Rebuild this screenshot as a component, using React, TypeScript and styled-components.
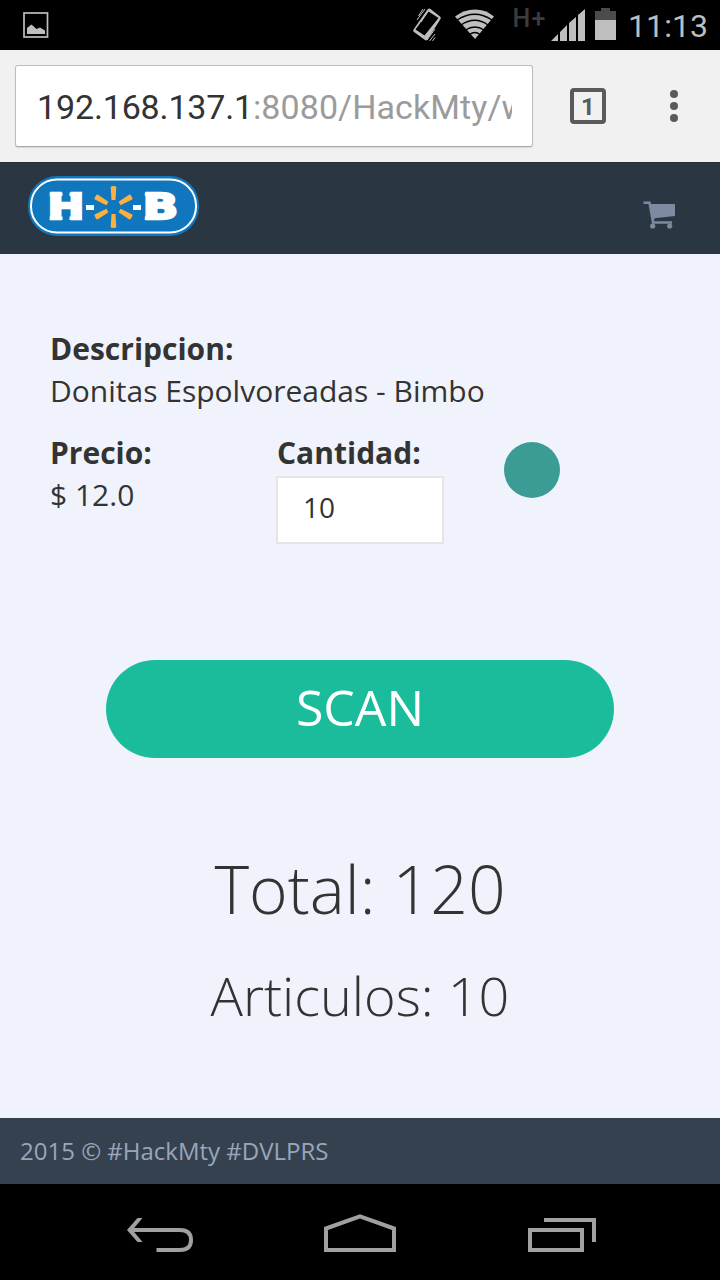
import React from "react";
import styled, { createGlobalStyle } from "styled-components";

const GlobalStyle = createGlobalStyle`
  * { box-sizing: border-box; }
  body { margin: 0; background: #000; }
`;

const Screen = styled.div`
  width: 720px;
  height: 1280px;
  display: flex;
  flex-direction: column;
  overflow: hidden;
  background: #f0f3fb;
  color: #333;
  font-family: "Open Sans", sans-serif;
`;

const StatusBar = styled.header`
  height: 50px;
  flex: none;
  display: flex;
  justify-content: space-between;
  background: #000;
`;

const Clock = styled.time`
  width: 92px;
  flex: none;
  padding-top: 7px;
  font: 400 32px/38px Roboto, sans-serif;
  letter-spacing: 0.1px;
  color: #bebebe;
  white-space: nowrap;
`;

const StatusGroup = styled.div`
  display: flex;
`;

const BrowserBar = styled.div`
  height: 112px;
  flex: none;
  display: flex;
  align-items: flex-start;
  padding: 15px 0 0 15px;
  background: #f1f1f1;
`;

const AddressField = styled.div`
  width: 518px;
  height: 82px;
  padding: 0 20px 0 21px;
  border: 1px solid #bdbdbd;
  border-bottom-color: #a9a9a9;
  border-radius: 3px;
  box-shadow: 0 1px 1px #d8d8d8;
  background: #fff;
`;

const Url = styled.div`
  overflow: hidden;
  white-space: nowrap;
  font: 400 34px/82px Roboto, sans-serif;
  letter-spacing: 0.08px;
  color: #9b9b9b;
`;

const Host = styled.span`
  letter-spacing: -0.15px;
  color: #333;
`;

const TabButton = styled.button`
  width: 36px;
  height: 36px;
  margin: 23px 0 0 37px;
  padding: 2px 0 0;
  border: 4px solid #5a5a5a;
  border-radius: 4px;
  background: none;
  color: #5a5a5a;
  font: 700 24px/26px Roboto, sans-serif;
`;

const MenuButton = styled.button`
  width: 8px;
  margin: 25px 0 0 64px;
  padding: 0;
  border: 0;
  background: none;
  display: flex;
  flex-direction: column;
  gap: 4px;
`;

const Dot = styled.i`
  width: 8px;
  height: 8px;
  border-radius: 50%;
  background: #5a5a5a;
`;

const SiteHeader = styled.div`
  height: 92px;
  flex: none;
  display: flex;
  justify-content: space-between;
  padding: 13px 44px 0 28px;
  border-top: 1px solid #242d37;
  background: #2b3643;
`;

const CartLink = styled.a`
  padding-top: 25px;
`;

const Main = styled.main`
  height: 864px;
  flex: none;
  display: flex;
  flex-direction: column;
  padding: 74px 50px 0;
`;

const Field = styled.div<{ $width?: number }>`
  width: ${(p) => (p.$width ? `${p.$width}px` : "auto")};
  font-size: 30px;
  line-height: 42px;
`;

const Label = styled.div<{ $indent?: number }>`
  padding-left: ${(p) => p.$indent ?? 0}px;
  font-weight: 700;
`;

const Row = styled.div`
  display: flex;
  margin-top: 20px;
`;

const QuantityInput = styled.input`
  display: block;
  width: 168px;
  height: 68px;
  margin-top: 2px;
  padding: 0 24px 6px 25px;
  border: 2px solid #e5e5e5;
  border-radius: 0;
  outline: 0;
  background: #fff;
  color: #333;
  font: 400 28px/40px "Open Sans", sans-serif;
`;

const RoundButton = styled.button`
  width: 56px;
  height: 56px;
  margin-top: 10px;
  padding: 0;
  border: 0;
  border-radius: 50%;
  background: #3b9c96;
`;

const ScanButton = styled.button`
  align-self: center;
  width: 508px;
  height: 98px;
  margin-top: 116px;
  padding: 0 0 4px;
  border: 0;
  border-radius: 50px;
  background: #1bbc9b;
  color: #fff;
  font: 400 50px/94px "Open Sans", sans-serif;
`;

const Summary = styled.div<{ $size: number; $gap: number }>`
  margin-top: ${(p) => p.$gap}px;
  text-align: center;
  font-weight: 300;
  font-size: ${(p) => p.$size}px;
  line-height: 76px;
`;

const Footer = styled.footer`
  height: 66px;
  flex: none;
  padding-left: 20px;
  background: #364150;
  color: #98a6ba;
  font-size: 24px;
  line-height: 66px;
`;

const NavBar = styled.nav`
  height: 96px;
  flex: none;
  background: #000;
`;

const StatusIcons = () => (
  <svg width="228" height="50" viewBox="400 0 228 50" fill="#bebebe">
    <path fillRule="evenodd" d="M427.5 9.5Q429 8 430.5 9L440 16.5Q441.5 17.5 440.5 19L427.5 39.5Q426.500 41 425 40L414 32Q412.500 31 413.500 29.500ZM428.500 11.500 415.500 29.500 424.500 35.500 438.500 18Z" />
    <path d="M417 20 425 9M418.500 16 423 9M421 22 429 10M427 40 435 29M429.500 41 435 34M432.500 41 435 37.500" stroke="#bebebe" strokeWidth="1" />
    <path d="M475 39 455 16.500Q464 9.500 475 9.500T494 16.500Z" />
    <path d="M457 20Q475 8.500 492 20M461 25Q475 15.500 488 25M465.500 30Q475 24 484 30M469.500 34.500Q475 30.500 480 34.500" stroke="#000" strokeWidth="1.400" fill="none" />
    <text x="512.500" y="27" fontFamily="Roboto" fontWeight="500" fontSize="25" fill="#3c3c3c" textLength="33" lengthAdjust="spacing">H+</text>
    <path d="M551 41 558 34V41ZM560 32 567 25V41H560ZM569 23 576 17V41H569ZM578 15 585 9V41H578Z" />
    <path d="M595 11H601V8H610V11H616V20H595Z" fill="#4b4b4b" />
    <path d="M595 20H616V40H595Z" />
  </svg>
);

const ray = "M-2.800-20Q-2.800-21 0-21T2.800-20L2-7H-2Z";

const Logo = () => (
  <svg width="171" height="60" viewBox="28 176 171 60">
    <rect x="28" y="176" width="171" height="60" rx="29" fill="#1076be" />
    <rect x="31" y="179.500" width="165" height="53" rx="26" fill="none" stroke="#fff" strokeWidth="2" />
    <g fill="#fff" stroke="#fff" strokeWidth="2.400" fontFamily="DejaVu Sans" fontWeight="700" fontSize="35">
      <text transform="translate(47.600 218.700) scale(1.260 1)">H</text>
      <text transform="translate(142.800 218.700) scale(1.330 1)">B</text>
    </g>
    <path d="M49.700 192.500H62.500V196H49.700ZM49.700 216.500H62.500V220H49.700ZM69.500 192.500H82V196H69.500ZM69.500 216.500H82V220H69.500ZM144.800 192.500H152V196H144.800ZM144.800 216.500H152V220H144.800Z" fill="#fff" />
    <path d="M86 205h8v5h-8zM133 205h8v5h-8z" fill="#fff" />
    <g transform="translate(113.500 207)" fill="#fbb040">
      {[0, 60, 120, 180, 240, 300].map((a) => (
        <path key={a} d={ray} transform={`rotate(${a})`} />
      ))}
    </g>
  </svg>
);

export default function App() {
  return (
    <>
      <GlobalStyle />
      <Screen>
        <StatusBar>
          <svg width="60" height="50" viewBox="0 0 60 50">
            <rect x="24" y="13" width="23.500" height="24" fill="none" stroke="#bebebe" strokeWidth="1.700" />
            <path d="M27 34V28L31.500 24.500 36.500 29 40 27.500 45 30.500V34Z" fill="#bebebe" />
          </svg>
          <StatusGroup>
            <StatusIcons />
            <Clock>11:13</Clock>
          </StatusGroup>
        </StatusBar>
        <BrowserBar>
          <AddressField>
            <Url><Host>192.168.137.1</Host>:8080/HackMty/w</Url>
          </AddressField>
          <TabButton>1</TabButton>
          <MenuButton aria-label="Menu"><Dot /><Dot /><Dot /></MenuButton>
        </BrowserBar>
        <SiteHeader>
          <Logo />
          <CartLink>
            <svg width="34" height="29" viewBox="642 201 34 29" fill="#7c8ba1">
              <path d="M643.500 202.800H649.500L653 222.500H672M652.500 221 654 217" fill="none" stroke="#7c8ba1" strokeWidth="2.400" />
              <path d="M649 204H674.500Q675 204 675 205V216L652 218.500Z" />
              <circle cx="652.700" cy="226" r="2.600" /><circle cx="669.700" cy="226" r="2.600" />
            </svg>
          </CartLink>
        </SiteHeader>
        <Main>
          <Field>
            <Label>Descripcion:</Label>
            Donitas Espolvoreadas - Bimbo
          </Field>
          <Row>
            <Field $width={226}>
              <Label>Precio:</Label>$ 12.0
            </Field>
            <Field $width={228}>
              <Label $indent={1}>Cantidad:</Label>
              <QuantityInput defaultValue="10" />
            </Field>
            <RoundButton aria-label="Actualizar" />
          </Row>
          <ScanButton>SCAN</ScanButton>
          <Summary $size={66} $gap={92}>Total: 120</Summary>
          <Summary $size={54} $gap={31}>Articulos: 10</Summary>
        </Main>
        <Footer>2015 © #HackMty #DVLPRS</Footer>
        <NavBar>
          <svg width="720" height="96" viewBox="0 1184 720 96" fill="none" stroke="#a0a0a0" strokeWidth="4">
            <path d="M130 1230H180C188 1230 191 1234 191 1240S188 1250 180 1250H156.500" />
            <path d="M137.500 1218H142.500L132.500 1230 142.500 1242H137.500L127 1230Z" fill="#a0a0a0" stroke="none" />
            <path d="M326 1228.500 360 1216.300 394 1228.500V1250H326Z" />
            <path d="M530 1230H582V1250H530ZM544 1220H594V1242" />
          </svg>
        </NavBar>
      </Screen>
    </>
  );
}
